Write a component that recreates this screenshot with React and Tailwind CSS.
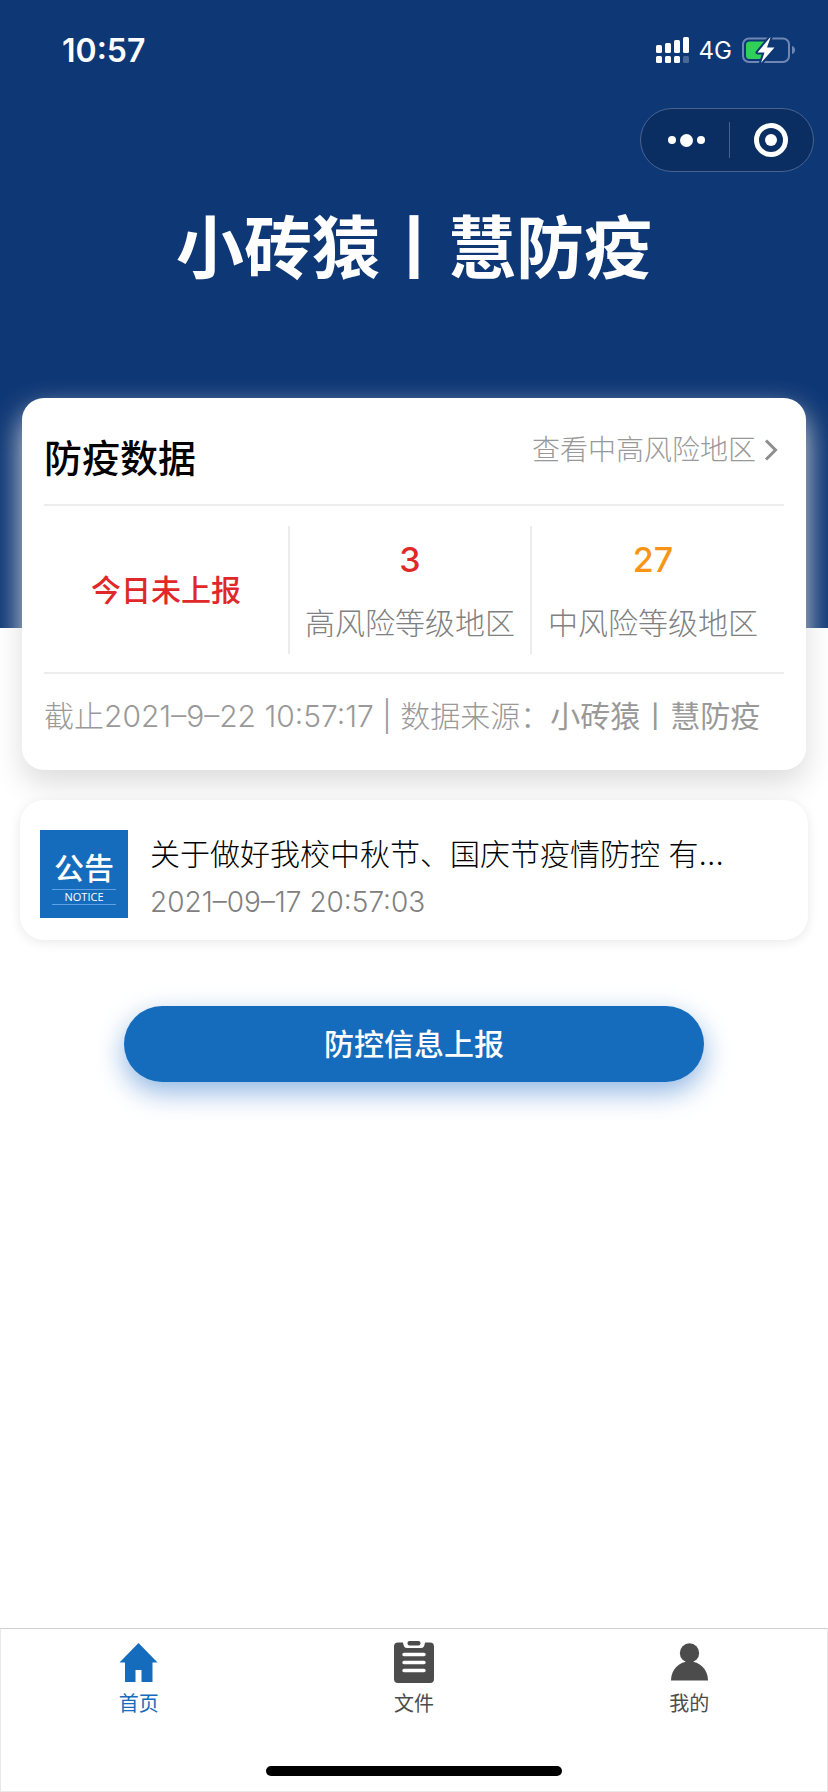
import React from "react";

const stats = [
  { value: "3", label: "高风险等级地区", color: "text-[#e02828]" },
  { value: "27", label: "中风险等级地区", color: "text-[#fa9416]" },
];

const SignalIcon = () => (
  <svg className="w-[34px] h-[27px]" viewBox="0 0 34 27" fill="#fff">
    <rect x="0" y="8" width="6" height="8" rx="1.5" />
    <rect x="9" y="6" width="6" height="10" rx="1.5" />
    <rect x="18" y="3" width="6" height="13" rx="1.5" />
    <rect x="27" y="0" width="6" height="16" rx="1.5" />
    <rect x="0" y="19" width="6" height="7" rx="1.5" />
    <rect x="9" y="19" width="6" height="7" rx="1.5" />
    <rect x="18" y="19" width="6" height="7" rx="1.5" />
    <rect x="27" y="19" width="6" height="7" rx="1.5" fillOpacity="0.25" />
  </svg>
);

const BatteryIcon = () => (
  <svg className="w-[53px] h-[27px]" viewBox="0 0 53 27">
    <rect x="1" y="1.5" width="46" height="23.5" rx="6" fill="none" stroke="#7087b3" strokeWidth="2" />
    <path d="M50 9c2 .6 3 2 3 4s-1 3.400-3 4z" fill="#7087b3" />
    <path d="M7.500 4.500H23v17.500H7.500a3.500 3.500 0 0 1-3.500-3.500V8a3.500 3.500 0 0 1 3.500-3.500z" fill="#30d158" />
    <path
      d="M28 .5 15.500 15.500h7L19 26l13.500-15.500h-7.500L28.500.5z"
      fill="#fff"
      stroke="#0e3775"
      strokeWidth="4"
      strokeLinejoin="round"
      paintOrder="stroke"
    />
  </svg>
);

const HomeIcon = () => (
  <svg className="w-11 h-11" viewBox="0 0 44 44" fill="currentColor">
    <path d="M21.500 2 2.500 21.500H8v19.500h10.500V29h6v12H35.500V21.500h5z" />
  </svg>
);

const FileIcon = () => (
  <svg className="w-11 h-11" viewBox="0 0 44 44" fill="currentColor">
    <rect x="15.500" y="0" width="13" height="4.500" rx="2" />
    <path d="M6 1.500h5c.6 3.800 1.500 5.500 4 5.500h14c2.500 0 3.400-1.700 4-5.500h5a4 4 0 0 1 4 4V38a4 4 0 0 1-4 4H6a4 4 0 0 1-4-4V5.500a4 4 0 0 1 4-4z" />
    <path d="M12 13.500h20M12 21.500h20M12 29.500h20" stroke="#fff" strokeWidth="3.500" strokeLinecap="round" />
  </svg>
);

const UserIcon = () => (
  <svg className="w-11 h-11" viewBox="0 0 44 44" fill="currentColor">
    <circle cx="22.500" cy="12" r="9.700" />
    <path d="M4 39.500C4 28 12.500 20.500 22.500 20.500S41 28 41 39.500z" />
  </svg>
);

const tabs = [
  { name: "首页", Icon: HomeIcon, color: "text-[#156cbd]" },
  { name: "文件", Icon: FileIcon, color: "text-[#4c4c4c]" },
  { name: "我的", Icon: UserIcon, color: "text-[#4c4c4c]" },
];

const StatusBar = () => (
  <div className="flex items-center justify-between h-[101px] pl-[62px] pr-[33px] text-white">
    <span className="text-[32px] leading-10 font-semibold">10:57</span>
    <div className="flex items-center">
      <SignalIcon />
      <span className="ml-[9px] mr-[10px] text-[24px] leading-8">4G</span>
      <BatteryIcon />
    </div>
  </div>
);

const Capsule = () => (
  <div className="flex justify-end mt-[7px] pr-[14px]">
    <div className="flex items-center w-[174px] h-16 rounded-full border border-[#4a6390] bg-[#0a2e62]">
      <button aria-label="更多" className="flex-1 flex items-center justify-center gap-1 pl-1">
        <span className="w-2 h-2 rounded-full bg-white" />
        <span className="w-[13px] h-[13px] rounded-full bg-white" />
        <span className="w-2 h-2 rounded-full bg-white" />
      </button>
      <span className="w-px h-9 bg-[#4a6390]" />
      <button aria-label="关闭" className="flex-1 flex items-center justify-center">
        <span className="flex items-center justify-center w-[34px] h-[34px] rounded-full border-5 border-white">
          <span className="w-3 h-3 rounded-full bg-white" />
        </span>
      </button>
    </div>
  </div>
);

const DataCard = () => (
  <section className="mx-[22px] -mt-[230px] px-[22px] rounded-[22px] bg-white shadow-[0_14px_30px_#dddddd]">
    <div className="flex items-start justify-between h-[108px] pt-8 border-b-2 border-[#ececec]">
      <h2 className="mt-[3px] text-[38px] leading-[50px] font-medium text-black">防疫数据</h2>
      <a href="#risk" className="flex items-center text-[28px] leading-10 font-light text-[#999]">
        查看中高风险地区
        <svg className="w-5 h-6 ml-1 mr-1" viewBox="0 0 20 24" fill="none" stroke="#8e8e8e" strokeWidth="3">
          <path d="M6 2.500 15.500 12 6 21.500" />
        </svg>
      </a>
    </div>
    <div className="grid grid-cols-[246fr_242fr_242fr] pt-5 pb-[18px] pr-[10px] border-b-2 border-[#ececec]">
      <div className="flex items-center justify-center h-32 border-r-2 border-[#ececec] text-[30px] font-medium text-[#e02828]">
        今日未上报
      </div>
      {stats.map((s, i) => (
        <div
          key={s.label}
          className={i === 0 ? "flex flex-col items-center pt-3 border-r-2 border-[#ececec]" : "flex flex-col items-center pt-3"}
        >
          <span className={`text-[34px] leading-11 font-medium ${s.color}`}>{s.value}</span>
          <span className="mt-[21px] text-[30px] leading-10 font-light whitespace-nowrap text-[#808080]">{s.label}</span>
        </div>
      ))}
    </div>
    <p className="pt-5 pb-8 text-[30px] leading-11 font-light whitespace-nowrap text-[#999]">
      截止2021–9–22 10:57:17 | 数据来源：<span className="font-normal">小砖猿丨慧防疫</span>
    </p>
  </section>
);

const NoticeCard = () => (
  <a
    href="#notice"
    className="flex mx-5 mt-[30px] pt-[30px] pb-4 pl-5 pr-16 rounded-[24px] bg-white shadow-[0_2px_12px_#e8e8e8]"
  >
    <div className="flex flex-col items-center shrink-0 w-[88px] h-[88px] pt-[17px] bg-[#156cbd] text-white">
      <span className="text-[30px] leading-[42px] font-medium">公告</span>
      <span className="w-16 border-y border-[#5fa0e6] text-center text-[11px] leading-[14px] font-['Liberation_Sans_Narrow','Open_Sans',sans-serif]">
        NOTICE
      </span>
    </div>
    <div className="ml-[22px] pt-0.5 min-w-0">
      <h3 className="text-[30px] leading-11 font-light whitespace-nowrap text-black">
        关于做好我校中秋节、国庆节疫情防控 有…
      </h3>
      <time className="block mt-1 text-[28px] leading-11 font-light text-[#808080]">2021–09–17 20:57:03</time>
    </div>
  </a>
);

const TabBar = () => (
  <nav className="mt-auto border border-[#e8e8e8] border-t-[#cfcfcf] bg-white">
    <div className="grid grid-cols-3 h-[137px] pt-3">
      {tabs.map(({ name, Icon, color }) => (
        <a key={name} href="#tab" className={`flex flex-col items-center ${color}`}>
          <Icon />
          <span className="mt-1 text-[20px] leading-[30px]">{name}</span>
        </a>
      ))}
    </div>
    <div className="w-[296px] h-[10px] mx-auto mb-[15px] rounded-full bg-black" />
  </nav>
);

export default function App() {
  return (
    <div className="flex flex-col min-h-screen bg-white font-['Inter','Noto_Sans_CJK_SC',sans-serif]">
      <header className="h-[628px] shrink-0 bg-[#0e3775]">
        <StatusBar />
        <Capsule />
        <h1 className="mt-[26px] text-center text-[68px] leading-[100px] font-bold text-white">小砖猿丨慧防疫</h1>
      </header>
      <DataCard />
      <NoticeCard />
      <button className="mx-[124px] mt-[66px] h-19 rounded-full bg-[#156cbd] text-[30px] font-medium text-white shadow-[0_10px_28px_#8fb5e3]">
        防控信息上报
      </button>
      <TabBar />
    </div>
  );
}
